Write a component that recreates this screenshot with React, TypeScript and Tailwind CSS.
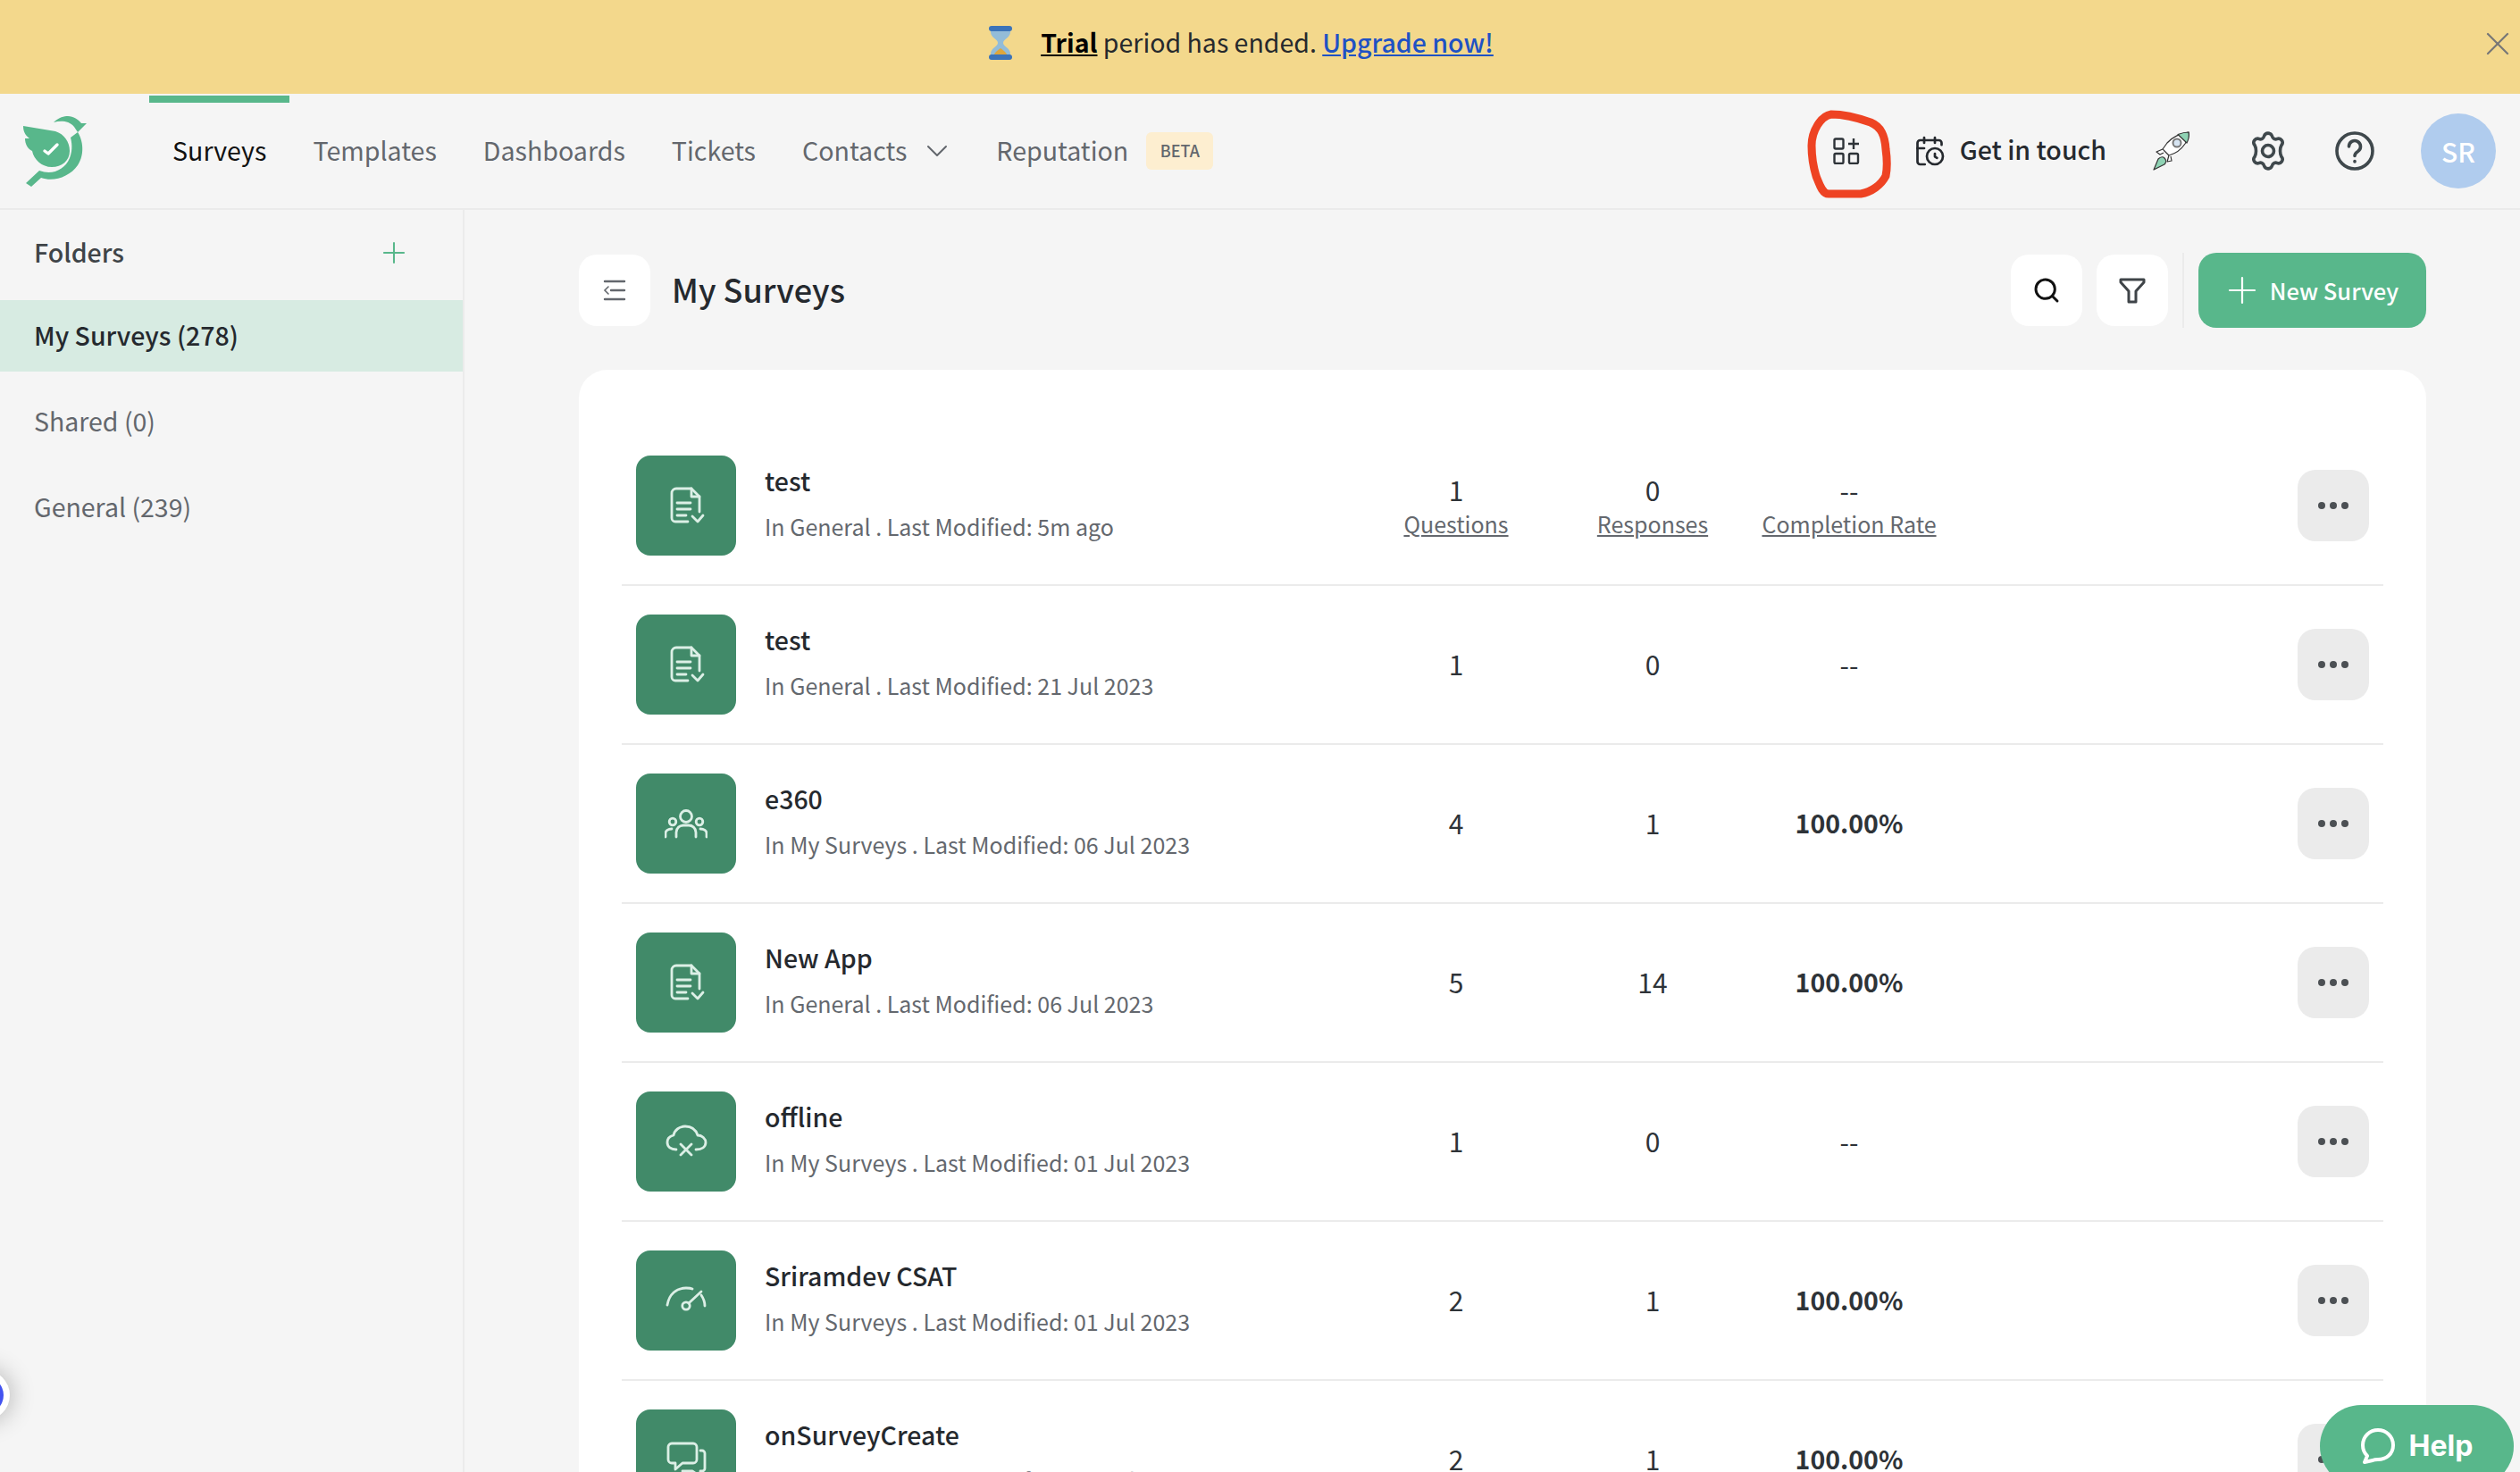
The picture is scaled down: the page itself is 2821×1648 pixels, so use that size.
import { CalendarClock, ChevronDown, Plus, Search, X } from 'lucide-react'

const rows = [
  { name: 'test', sub: 'In General . Last Modified: 5m ago', icon: 'doc', q: '1', r: '0', c: '--', labels: true },
  { name: 'test', sub: 'In General . Last Modified: 21 Jul 2023', icon: 'doc', q: '1', r: '0', c: '--' },
  { name: 'e360', sub: 'In My Surveys . Last Modified: 06 Jul 2023', icon: 'users', q: '4', r: '1', c: '100.00%' },
  { name: 'New App', sub: 'In General . Last Modified: 06 Jul 2023', icon: 'doc', q: '5', r: '14', c: '100.00%' },
  { name: 'offline', sub: 'In My Surveys . Last Modified: 01 Jul 2023', icon: 'cloud', q: '1', r: '0', c: '--' },
  { name: 'Sriramdev CSAT', sub: 'In My Surveys . Last Modified: 01 Jul 2023', icon: 'gauge', q: '2', r: '1', c: '100.00%' },
  { name: 'onSurveyCreate', sub: 'In My Surveys . Last Modified: 01 Jul 2023', icon: 'chat', q: '2', r: '1', c: '100.00%' },
]

function TileIcon({ kind }: { kind: string }) {
  const common = { width: 48, height: 48, viewBox: '0 0 48 48', fill: 'none', stroke: '#dcefe6', strokeWidth: 2.8, strokeLinecap: 'round' as const, strokeLinejoin: 'round' as const }
  if (kind === 'users') {
    return (
      <svg {...common}>
        <circle cx="24" cy="16" r="6.5" />
        <circle cx="9" cy="22" r="3.8" />
        <circle cx="39" cy="22" r="3.8" />
        <path d="M13 39v-5c0-5 4-8 8-8h6c4 0 8 3 8 8v5" />
        <path d="M1 39v-4c0-3 3-5 7-5" />
        <path d="M47 39v-4c0-3-3-5-7-5" />
      </svg>
    )
  }
  if (kind === 'cloud') {
    return (
      <svg {...common}>
        <path d="M13 33C7 33 3 30 3 25C3 21 6 18 10 17C11 11 17 7 23 7C30 7 35 11 37 17C42 17 46 21 46 25C46 30 42 33 35 33" />
        <path d="M18 27l12 12M30 27L18 39" />
      </svg>
    )
  }
  if (kind === 'gauge') {
    return (
      <svg {...common}>
        <path d="M3 29C5 17 13 10 24 10c3 0 5 0 7 1" />
        <path d="M41 18c2 3 4 7 4 12" />
        <circle cx="24" cy="30" r="4.2" />
        <path d="M27 27L41 14" />
      </svg>
    )
  }
  if (kind === 'chat') {
    return (
      <svg {...common}>
        <path d="M8 6h24a4 4 0 0 1 4 4v14a4 4 0 0 1-4 4H20l-8 7v-7H8a4 4 0 0 1-4-4V10a4 4 0 0 1 4-4z" />
        <path d="M40 14h2a3 3 0 0 1 3 3v17a3 3 0 0 1-3 3h-2v6l-9-6H20" />
      </svg>
    )
  }
  return (
    <svg {...common}>
      <path d="M39 31V14L30 5H13a5 5 0 0 0-5 5v28a4 4 0 0 0 4 4h14" />
      <path d="M30 5v9h9" />
      <path d="M14 21h15M14 28h15M14 35h10" />
      <path d="M31 36l6 6 6-7" />
    </svg>
  )
}

function Stat({ value, label, bold }: { value: string; label?: string; bold?: boolean }) {
  return (
    <div className={`w-[220px] flex flex-col items-center ${label ? '' : 'pb-[3px]'}`}>
      <span className={`leading-[38px] text-[#2e3338] ${bold ? 'text-[28.5px] font-bold' : 'text-[30px]'}`}>{value}</span>
      {label && <span className="mt-[2px] text-[25px] leading-[34px] text-[#64686e] underline">{label}</span>}
    </div>
  )
}

function SurveyRow({ row }: { row: (typeof rows)[number] }) {
  return (
    <div className="flex items-center h-[178px] shrink-0 px-4 py-8 border-b-2 border-[#ebebeb]">
      <div className="w-[112px] h-[112px] shrink-0 rounded-2xl bg-[#418a69] flex items-center justify-center">
        <TileIcon kind={row.icon} />
      </div>
      <div className="w-[696px] pl-8 pb-[6px] flex flex-col gap-[16px]">
        <span className="text-[28.5px] leading-[36px] font-medium text-[#25292e]">{row.name}</span>
        <span className="text-[25px] leading-[34px] text-[#64686e]">{row.sub}</span>
      </div>
      <Stat value={row.q} label={row.labels ? 'Questions' : undefined} />
      <Stat value={row.r} label={row.labels ? 'Responses' : undefined} />
      <Stat value={row.c} label={row.labels ? 'Completion Rate' : undefined} bold={row.c !== '--'} />
      <div className="ml-auto w-20 h-20 rounded-[20px] bg-[#ebebeb] flex items-center justify-center gap-[5px]">
        <span className="w-2 h-2 rounded-full bg-[#4c5054]" />
        <span className="w-2 h-2 rounded-full bg-[#4c5054]" />
        <span className="w-2 h-2 rounded-full bg-[#4c5054]" />
      </div>
    </div>
  )
}

export default function App() {
  return (
    <div className="relative w-full h-[1648px] overflow-hidden flex flex-col bg-[#f5f5f5] font-['Noto_Sans_CJK_SC','Noto_Sans',sans-serif]">
      <div className="relative h-[105px] shrink-0 bg-[#f3d88c] flex items-center justify-center gap-[30px] pr-[44px] pb-[10px] text-[28.5px] text-[#26292c]">
        <svg width="30" height="40" viewBox="0 0 30 40">
          <path d="M4 4h22v4c0 6-8 8-8 12s8 6 8 12v4H4v-4c0-6 8-8 8-12S4 14 4 8z" fill="#93bcd8" />
          <path d="M7 35c1-4 5-7 8-9 3 2 7 5 8 9z" fill="#dda63c" />
          <rect x="2" y="1" width="26" height="6" rx="3" fill="#3b73b9" />
          <rect x="2" y="33" width="26" height="6" rx="3" fill="#3b73b9" />
        </svg>
        <span>
          <span className="font-semibold text-black underline">Trial</span> period has ended.{' '}
          <span className="font-medium text-[#1f52c4] underline">Upgrade now!</span>
        </span>
        <X className="absolute right-[3px] top-[27px] text-[#777]" size={44} strokeWidth={1.2} />
      </div>

      <div className="h-[130px] shrink-0 flex items-center border-b-2 border-[#ebebeb] pl-[26px] pr-[27px]">
        <svg width="71" height="79" viewBox="26 29 71 79" fill="#58b78b">
          <path d="M26 40l36 6c10 3 16 12 16 22 0 11-9 18-20 18-11 0-20-8-22-18-5-2-8-8-8-14h5c-5-4-7-8-7-14z" />
          <path d="M87 47c6 9 8 25 0 37-9 13-27 19-41 14l-11 10-6-4 15-14c14 5 28 0 34-14 4-10 2-19 1-23z" />
          <path d="M60 36c6-6 12-7 16-7 6 0 12 4 15 8h6L87 47l-4-6c-6-7-15-7-23-5z" />
          <path d="M50 68l4 3 10-10" fill="none" stroke="#fff" strokeWidth="3.4" strokeLinecap="round" strokeLinejoin="round" />
        </svg>
        <nav className="ml-[70px] flex items-stretch self-stretch text-[28.6px] text-[#63676d]">
          <div className="relative px-[26px] pb-px flex items-center text-[#111]">
            <span className="absolute left-0 right-0 top-[2px] h-2 bg-[#58b78b]" />
            Surveys
          </div>
          <div className="px-[26px] pb-px flex items-center">Templates</div>
          <div className="px-[26px] pb-px flex items-center">Dashboards</div>
          <div className="px-[26px] pb-px flex items-center">Tickets</div>
          <div className="pl-[26px] pr-[20px] pb-px flex items-center gap-[14px]">
            Contacts <ChevronDown size={40} strokeWidth={1.2} />
          </div>
          <div className="pl-[26px] pb-px flex items-center gap-[20px]">
            Reputation
            <span className="h-[42px] w-[75px] rounded-md bg-[#fdeed0] flex items-center justify-center text-[18px] font-medium text-[#63676d]">BETA</span>
          </div>
        </nav>
        <div className="ml-auto flex items-center">
          <svg width="30" height="30" viewBox="0 0 30 30" fill="none" stroke="#2e3338" strokeWidth="2.4">
            <rect x="1.5" y="1.5" width="10" height="11" rx="1.5" />
            <rect x="1.5" y="18" width="10" height="11" rx="1.5" />
            <rect x="18" y="18" width="10" height="11" rx="1.5" />
            <path d="M23 1v12M17 7h12" />
          </svg>
          <CalendarClock className="ml-[60px] text-[#25292e]" size={36} strokeWidth={1.8} />
          <span className="ml-4 pb-[3px] text-[28.5px] font-medium text-[#25292e]">Get in touch</span>
          <svg className="ml-[52px]" width="42" height="44" viewBox="0 0 42 44" fill="none" stroke="#333" strokeWidth="1.2" strokeLinejoin="round">
            <path d="M40 1C31 2 21 7 16 13L11 20L18 27C25 25 32 20 36 14C39 9 41 5 40 1Z" fill="#fff" />
            <path d="M40 1C36 1 32 2 28 3.500L38 13C40 9 41 5 40 1Z" fill="#8fd3b4" />
            <circle cx="27" cy="13" r="4.500" fill="#d6e4f2" stroke="#777" strokeWidth="2" />
            <path d="M11 20L4 23L8 26L12 24M18 27L16 34L21 33L20 28" fill="#fff" />
            <path d="M1 43L6 31C8 29 11 28 13 30C15 32 15 35 13 37Z" fill="#8fd3b4" />
          </svg>
          <svg className="ml-[65px]" width="44" height="44" viewBox="0 0 44 44" fill="none" stroke="#3f484c" strokeWidth="3.6" strokeLinejoin="round">
            <path d="M17.500 5.500C19 1 25 1 26.500 5.500C27 8 30 9.500 32 8.500C36.500 7 40 12 37 15.500C35 19 35 25 37 28.500C40 32 36.500 37 32 35.500C30 34.500 27 36 26.500 38.500C25 43 19 43 17.500 38.500C17 36 14 34.500 12 35.500C7.500 37 4 32 7 28.500C9 25 9 19 7 15.500C4 12 7.500 7 12 8.500C14 9.500 17 8 17.500 5.500Z" />
            <circle cx="22" cy="22" r="6.500" />
          </svg>
          <svg className="ml-[53px]" width="44" height="44" viewBox="0 0 44 44" fill="none" stroke="#3f484c" strokeWidth="3.6" strokeLinecap="round">
            <circle cx="22" cy="22" r="20" />
            <path d="M15.500 17a6.500 6.500 0 1 1 10 5.500c-2.500 1.500-3.500 2.500-3.500 5" />
            <path d="M22 33.500v.5" />
          </svg>
          <div className="ml-[52px] w-[84px] h-[84px] rounded-full bg-[#b0ccee] flex items-center justify-center text-[30px] font-medium text-white">SR</div>
        </div>
      </div>

      <div className="flex-1 flex min-h-0">
        <aside className="w-[520px] shrink-0 border-r-2 border-[#ebebeb] text-[28.5px] text-[#63676d]">
          <div className="h-[101px] pb-[6px] flex items-center justify-between pl-[38px] pr-[58px]">
            <span className="font-medium text-[#3f4448]">Folders</span>
            <Plus className="text-[#58b78b]" size={38} strokeWidth={1.3} />
          </div>
          <div className="h-[80px] pb-[2px] flex items-center pl-[38px] bg-[#d7ebe2] font-medium text-[#25292e]">My Surveys (278)</div>
          <div className="h-[96px] mt-[8px] pb-[2px] flex items-center pl-[38px]">Shared (0)</div>
          <div className="h-[96px] pb-[2px] flex items-center pl-[38px]">General (239)</div>
        </aside>

        <main className="flex-1 min-w-0 pl-[128px] pr-[105px] pt-[48px] flex flex-col">
          <div className="h-[84px] shrink-0 flex items-center">
            <div className="w-20 h-20 rounded-[20px] bg-white flex items-center justify-center">
              <svg width="26" height="26" viewBox="0 0 26 26" fill="none" stroke="#63676d" strokeWidth="2.4" strokeLinecap="round">
                <path d="M2 3h22M9 13h15M2 23h22" />
                <path d="M6 9l-4 4 4 4" strokeWidth="1.6" />
              </svg>
            </div>
            <h1 className="ml-6 pb-[5px] text-[36px] font-medium text-[#25292e]">My Surveys</h1>
            <div className="ml-auto w-20 h-20 rounded-[20px] bg-white flex items-center justify-center">
              <Search className="text-[#111]" size={32} strokeWidth={2.2} />
            </div>
            <div className="ml-4 w-20 h-20 rounded-[20px] bg-white flex items-center justify-center">
              <svg width="30" height="30" viewBox="0 0 30 30" fill="none" stroke="#3f4448" strokeWidth="3" strokeLinejoin="round">
                <path d="M2 3h26v3l-9 10v12h-8V16L2 6z" />
              </svg>
            </div>
            <div className="ml-4 w-[2px] h-[84px] bg-[#ebebeb]" />
            <div className="ml-4 w-[255px] h-[84px] pr-[6px] rounded-[20px] bg-[#58b78b] flex items-center justify-center gap-[7px] text-[25.5px] font-medium text-white">
              <Plus size={48} strokeWidth={1.1} />
              New Survey
            </div>
          </div>
          <div className="mt-[47px] flex-1 min-h-0 overflow-hidden bg-white rounded-t-[32px] px-12 pt-16 flex flex-col">
            {rows.map((row, i) => (
              <SurveyRow key={i} row={row} />
            ))}
          </div>
        </main>
      </div>

      {/* annotation scribble on top of the screenshot */}
      <svg className="absolute left-[2020px] top-[122px]" width="100" height="100" viewBox="0 0 100 100" fill="none" stroke="#ee4323" strokeWidth="9" strokeLinecap="round" strokeLinejoin="round">
        <path d="M30 6C18 8 8 25 8 41C8 55 10 65 13 75C17 85 20 95 27 95L63 95C75 93 86 85 91 75C93 65 92 52 91 45C90 30 86 20 74 15C60 10 45 6 30 6Z" />
      </svg>

      <div className="absolute -left-[45px] top-[1534px] w-[56px] h-[56px] rounded-full bg-white shadow-[0_0_28px_rgba(0,0,0,0.3)] flex items-center justify-center">
        <div className="w-[42px] h-[42px] rounded-full bg-[#4353f0]" />
      </div>

      <div className="absolute left-[2597px] top-[1573px] w-[217px] h-[92px] rounded-full bg-[#58b78b] flex items-center justify-center gap-[16px] text-[32px] font-bold text-white font-['Inter',sans-serif]">
        <svg width="38" height="40" viewBox="0 0 38 40" fill="none" stroke="#fff" strokeWidth="4" strokeLinejoin="round">
          <path d="M19 2c9 0 17 7 17 17s-8 16-17 16c-2 0-4 0-6 1l-9 2 3-7C4 28 2 24 2 19 2 9 10 2 19 2z" />
        </svg>
        Help
      </div>
    </div>
  )
}
